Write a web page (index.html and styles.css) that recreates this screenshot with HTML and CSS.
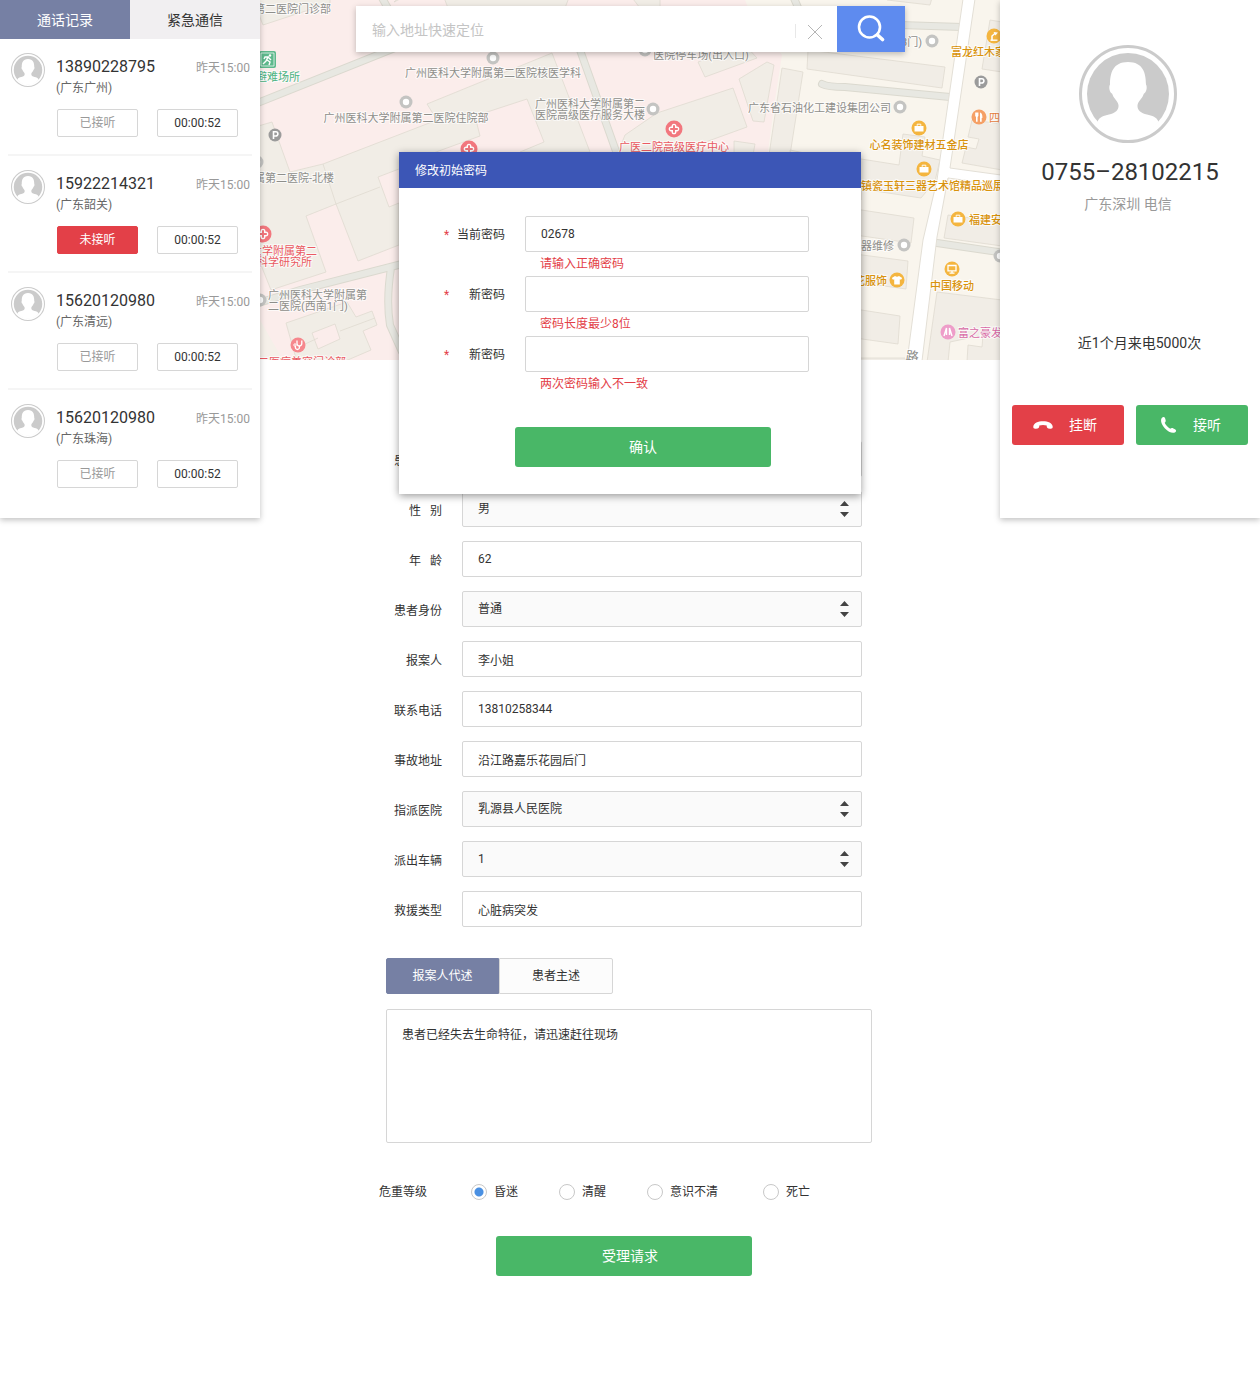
FILE: index.html
```html
<!DOCTYPE html>
<html lang="zh-CN">
<head>
<meta charset="utf-8">
<meta name="viewport" content="width=device-width, initial-scale=1">
<title>急救调度中心</title>
<link rel="stylesheet" href="styles.css">
</head>
<body>
<svg class="sprite" aria-hidden="true">
  <symbol id="avatar" viewBox="0 0 98 98">
    <circle cx="49" cy="49" r="47.5" fill="#fff" stroke="#cbcbcb" stroke-width="3"/>
    <circle cx="49" cy="49" r="41" fill="#cbcbcb"/>
    <path fill="#fff" d="M18.5 77C20 72 25 70.500 30 69.500C36 68 40 65.500 39.500 60C39 57 37 55.500 35 52.500C34 51 33.500 49.500 33 48.500C30.500 47.500 29.500 42 31 39.500C31 28 34 17 49 17C64 17 67 28 67 39.500C68.500 42 67.500 47.500 65 48.500C64.500 49.500 64 51 63 52.500C61 55.500 59 57 58.500 60C58 65.500 62 68 68 69.500C73 70.500 78 72 79.500 77C72 86 62 91.500 49 91.500C36 91.500 26 86 18.500 77Z"/>
  </symbol>
  <symbol id="pin" viewBox="-7 -7 14 14"><circle r="6.500" fill="#c4c4c2"/><circle r="3.200" fill="#fff"/></symbol>
  <symbol id="parking" viewBox="-7 -7 14 14"><circle r="6.500" fill="#9b9b9b"/><path d="M-1.500 4V-3.200H.8a2 2 0 0 1 0 4.200H-1.500" fill="none" stroke="#fff" stroke-width="1.600"/></symbol>
  <symbol id="hospital" viewBox="-9 -9 18 18"><circle r="8.500" fill="#f2777e"/><path d="M-2.400-2.400C-3-6.300 3-6.300 2.400-2.400C6.300-3 6.300 3 2.400 2.400C3 6.300-3 6.300-2.400 2.400C-6.300 3-6.300-3-2.400-2.400Z" fill="#fff"/><path d="M0-3.800V3.800M-3.800 0H3.800" stroke="#f2777e" stroke-width="2"/></symbol>
  <symbol id="clinic" viewBox="-8 -8 16 16"><circle r="7.500" fill="#f6878d"/><path d="M-1-4.500v3a2.400 2.400 0 0 0 4.800 0v-3M1.400 1v1.500a2 2 0 0 1-4 0V1" fill="none" stroke="#fff" stroke-width="1.300"/><circle cx="-3" cy="0" r="1.200" fill="none" stroke="#fff"/></symbol>
  <symbol id="shop" viewBox="-8 -8 16 16"><circle r="7.500" fill="#f4b53f"/><path d="M-4.500-2H4.500V3.500H-4.500Z" fill="#fff"/><path d="M-1.800-2.200V-3.800H1.800V-2.200" fill="none" stroke="#fff" stroke-width="1"/></symbol>
  <symbol id="telecom" viewBox="-8 -8 16 16"><circle r="7.500" fill="#f4b53f"/><path d="M-4-3.500H4V1.800H-4ZM0 2V4M-2.500 4.200H2.500" fill="none" stroke="#fff" stroke-width="1.300"/></symbol>
  <symbol id="clothes" viewBox="-8 -8 16 16"><circle r="7.500" fill="#f4b53f"/><path d="M-2-4Q0-2.500 2-4L5.200-2 4-.2 2.800-.8V4.500H-2.800V-.8L-4-.2-5.200-2Z" fill="#fff"/></symbol>
  <symbol id="furniture" viewBox="-8 -8 16 16"><circle r="7.500" fill="#f4b53f"/><path d="M-3.500 4.200H3.500" stroke="#fff" stroke-width="1.400"/><path d="M-.5-4L4-3.500 1.500-.5Z" fill="#fff"/><path d="M-2 4V0L1.500-3" fill="none" stroke="#fff" stroke-width="1.500"/></symbol>
  <symbol id="food" viewBox="-8 -8 16 16"><circle r="7.500" fill="#f5a066"/><path d="M-3.800-4.500H-.6V-1L-1.400 0V4.800H-3V0L-3.800-1ZM1-4.500Q3.600-4 3.400 1H2.700V4.800H1Z" fill="#fff"/></symbol>
  <symbol id="hair" viewBox="-8 -8 16 16"><circle r="7.500" fill="#ee9dc9"/><path d="M-4 4L-1.500-4V3M4 4L1.500-4V3" fill="none" stroke="#fff" stroke-width="1.400"/></symbol>
</svg>

<div class="page">
  <aside class="panel calls">
    <nav class="call-tabs">
      <button type="button" class="call-tab active">通话记录</button>
      <button type="button" class="call-tab">紧急通信</button>
    </nav>
    <ul class="call-list">
      <li class="call">
        <svg class="call-avatar"><use href="#avatar"/></svg>
        <div class="call-info">
          <div class="call-head"><span class="call-number">13890228795</span><time>昨天15:00</time></div>
          <p class="call-region">(广东广州)</p>
          <div class="call-actions"><button type="button" class="tag muted">已接听</button><button type="button" class="tag">00:00:52</button></div>
        </div>
      </li>
      <li class="call">
        <svg class="call-avatar"><use href="#avatar"/></svg>
        <div class="call-info">
          <div class="call-head"><span class="call-number">15922214321</span><time>昨天15:00</time></div>
          <p class="call-region">(广东韶关)</p>
          <div class="call-actions"><button type="button" class="tag missed">未接听</button><button type="button" class="tag">00:00:52</button></div>
        </div>
      </li>
      <li class="call">
        <svg class="call-avatar"><use href="#avatar"/></svg>
        <div class="call-info">
          <div class="call-head"><span class="call-number">15620120980</span><time>昨天15:00</time></div>
          <p class="call-region">(广东清远)</p>
          <div class="call-actions"><button type="button" class="tag muted">已接听</button><button type="button" class="tag">00:00:52</button></div>
        </div>
      </li>
      <li class="call">
        <svg class="call-avatar"><use href="#avatar"/></svg>
        <div class="call-info">
          <div class="call-head"><span class="call-number">15620120980</span><time>昨天15:00</time></div>
          <p class="call-region">(广东珠海)</p>
          <div class="call-actions"><button type="button" class="tag muted">已接听</button><button type="button" class="tag">00:00:52</button></div>
        </div>
      </li>
    </ul>
  </aside>

  <main class="center">
    <section class="map-area">
      <svg class="map" viewBox="260 0 740 360" preserveAspectRatio="xMidYMid slice" role="img" aria-label="地图">
        <rect x="260" width="740" height="360" fill="#fbedeb"/>
        <path d="M745 0L750 12 782 55 775 100 768 152V360H1000V0Z" fill="#f9f5ed"/>
        <path d="M260 320L283 360H260Z" fill="#f5f0e9"/>
        <g fill="#f1ede6" stroke="#dfdbd0" stroke-width=".8">
          <path d="M255-5H330V3L263 25 255 5ZM394 2L408-5H402ZM443-5H570L565 8H448ZM630-5H660V8H640Z"/>
          <path d="M427 104L552 53 567 92 590 152H520L544 142 527 99 475 116 480 136 436 152 399 169 378 177 389 207 399 203V245L358 261 336 204 306 216 326 272 271 290 255 250V127L272 122 290 172 323 164 437 120Z"/>
          <path d="M323 164L336 204 380 187" fill="none"/>
          <path d="M286 323L347 302 356 317 372 311 377 325 363 331 371 350 343 362H297Z"/>
          <path d="M312 333L335 324 340 339 318 349Z" fill="#fbedeb"/><path d="M340 331L375 318M318 338L303 345" fill="none"/>
          <path d="M698 62L705 77 757 58 745 45ZM739 79L767 62 774 65 764 122 753 121ZM657 113L733 88 747 127 700 144 690 155H617L625 135ZM734 141L755 144 753 155H734ZM782 68L803 72 790 155H769ZM790 150L861 165V200H790ZM808 50L945 67 942 88 807 69ZM887-2H932L930 5 887 0Z"/>
          <path d="M990 20L1002 22V72L982 69ZM972 120L1002 124V170L962 163 966 147 976 149 979 139 968 137ZM903 134L925 137 922 156 940 160 935 181 921 198 855 188V158L899 165ZM855 209L914 218 911 243 855 235ZM855 254L908 261 906 289 855 282ZM855 309L900 316 898 344 855 338ZM948 215L1002 222V246L944 238ZM937 292L1002 300V362H967L968 345 982 347 983 335 950 342 948 362H927ZM855 358H905V362H855Z"/>
        </g>
        <g fill="none" stroke="#dbd9cf" stroke-linecap="round">
          <g stroke-width="8"><path d="M255 104L420 38M572 25L580 50 617 154M381-4L390 12M793-4L800 12M255 304L300 290 402 264M391 268Q386 300 390 325L402 352M822 84Q828 87 845 87L950 97M900 25L962 27M937 243L1005 253"/></g>
          <g stroke="#e8e8e2" stroke-width="6"><path d="M255 104L420 38M572 25L580 50 617 154M381-4L390 12M793-4L800 12M255 304L300 290 402 264M391 268Q386 300 390 325L402 352M822 84Q828 87 845 87L950 97M900 25L962 27M937 243L1005 253"/></g>
        </g>
        <path d="M963-1L937 180 923 240 907 361H922L937 237 948 178 1001 185V175L950 168 975-1Z" fill="#fff" stroke="#e3dfd6"/>
        <rect x="259" y="51" width="17" height="17" rx="2" fill="#5eb98c"/>
        <path d="M261 53H274V66H261Z" fill="none" stroke="#fff" stroke-width=".7"/>
        <path d="M263 64L266 61 268 57 265 57 264 59M268 57L271 60M267 60L270 62 269 65" fill="none" stroke="#fff" stroke-width="1.400"/><circle cx="270" cy="55.500" r="1.200" fill="#fff"/>
        <g>
          <use href="#pin" x="486" y="51" width="14" height="14"/><use href="#pin" x="399" y="95" width="14" height="14"/>
          <use href="#pin" x="646" y="102" width="14" height="14"/><use href="#pin" x="638" y="43" width="14" height="14"/>
          <use href="#pin" x="925" y="34" width="14" height="14"/><use href="#pin" x="893" y="100" width="14" height="14"/>
          <use href="#pin" x="897" y="238" width="14" height="14"/><use href="#pin" x="993" y="249" width="14" height="14"/>
          <use href="#pin" x="250" y="155" width="14" height="14"/><use href="#pin" x="253" y="293" width="14" height="14"/>
          <use href="#parking" x="268" y="128" width="14" height="14"/><use href="#parking" x="974" y="75" width="14" height="14"/>
          <use href="#hospital" x="460" y="140" width="18" height="18"/><use href="#hospital" x="665" y="120" width="18" height="18"/><use href="#hospital" x="254" y="225" width="18" height="18"/>
          <use href="#clinic" x="290" y="337" width="16" height="16"/>
          <use href="#shop" x="911" y="120" width="16" height="16"/><use href="#shop" x="916" y="161" width="16" height="16"/><use href="#shop" x="950" y="211" width="16" height="16"/>
          <use href="#telecom" x="944" y="261" width="16" height="16"/><use href="#clothes" x="889" y="272" width="16" height="16"/>
          <use href="#furniture" x="986" y="28" width="16" height="16"/><use href="#food" x="971" y="109" width="16" height="16"/><use href="#hair" x="940" y="324" width="16" height="16"/>
        </g>
        <g class="place">
          <text class="end" x="331" y="13">第二医院门诊部</text>
          <text class="mid" x="493" y="77">广州医科大学附属第二医院核医学科</text>
          <text class="mid" x="406" y="122">广州医科大学附属第二医院住院部</text>
          <text class="mid"><tspan x="590" y="108">广州医科大学附属第二</tspan><tspan x="590" y="119">医院高级医疗服务大楼</tspan></text>
          <text class="end" x="334" y="182">属第二医院-北楼</text>
          <text class="mid" x="701" y="59">医院停车场(出入口)</text>
          <text class="end" x="922" y="46">(3门)</text>
          <text class="end" x="891" y="112">广东省石油化工建设集团公司</text>
          <text class="end" x="894" y="250">电器维修</text>
          <text><tspan x="268" y="299">广州医科大学附属第</tspan><tspan x="268" y="310">二医院(西南1门)</tspan></text>
          <text class="street" x="906" y="361" transform="rotate(8 912 355)">路</text>
        </g>
        <g class="place safe"><text class="end" x="300" y="81">避难场所</text></g>
        <g class="place medical">
          <text class="mid" x="674" y="151">广医二院高级医疗中心</text>
          <text class="end"><tspan x="317" y="255">大学附属第二</tspan><tspan x="312" y="266">科学研究所</tspan></text>
          <text class="end" x="346" y="366">二医病美容门诊部</text>
        </g>
        <g class="place business">
          <text x="951" y="56">富龙红木家</text>
          <text class="mid" x="919" y="149">心名装饰建材五金店</text>
          <text class="end" x="1004" y="190">德镇瓷玉轩三器艺术馆精品巡展</text>
          <text x="969" y="224">福建安</text>
          <text class="end" x="887" y="285">花服饰</text>
          <text class="mid" x="952" y="290">中国移动</text>
        </g>
        <g class="place dining"><text x="989" y="122">四</text></g>
        <g class="place beauty"><text x="958" y="337">富之豪发</text></g>
      </svg>
      <form class="search">
        <input class="search-input" type="text" placeholder="输入地址快速定位" aria-label="输入地址快速定位">
        <button type="button" class="search-clear" aria-label="清除"><svg width="16" height="16" viewBox="0 0 16 16"><path d="M1 1L15 15M15 1L1 15" stroke="#b5b5b5"/></svg></button>
        <button type="button" class="search-go" aria-label="搜索"><svg width="28" height="28" viewBox="0 0 28 28" fill="none" stroke="#fff" stroke-linecap="round"><circle cx="12.500" cy="12" r="10.500" stroke-width="2.600"/><path d="M20.500 20L25.500 24.500" stroke-width="3.600"/></svg></button>
      </form>
    </section>

    <form class="case">
      <div class="row"><label for="name">患者姓名</label><input class="box" id="name" type="text"></div>
      <div class="row"><label for="sex">性&nbsp;&nbsp;&nbsp;别</label><span class="pick"><select class="box" id="sex"><option>男</option><option>女</option></select><svg viewBox="0 0 9 16"><path d="M0 5L4.500 0 9 5ZM0 11H9L4.500 16Z"/></svg></span></div>
      <div class="row"><label for="age">年&nbsp;&nbsp;&nbsp;龄</label><input class="box" id="age" type="text" value="62"></div>
      <div class="row"><label for="identity">患者身份</label><span class="pick"><select class="box" id="identity"><option>普通</option></select><svg viewBox="0 0 9 16"><path d="M0 5L4.500 0 9 5ZM0 11H9L4.500 16Z"/></svg></span></div>
      <div class="row"><label for="reporter">报案人</label><input class="box" id="reporter" type="text" value="李小姐"></div>
      <div class="row"><label for="phone">联系电话</label><input class="box" id="phone" type="text" value="13810258344"></div>
      <div class="row"><label for="address">事故地址</label><input class="box" id="address" type="text" value="沿江路嘉乐花园后门"></div>
      <div class="row"><label for="hospital-name">指派医院</label><span class="pick"><select class="box" id="hospital-name"><option>乳源县人民医院</option></select><svg viewBox="0 0 9 16"><path d="M0 5L4.500 0 9 5ZM0 11H9L4.500 16Z"/></svg></span></div>
      <div class="row"><label for="vehicles">派出车辆</label><span class="pick"><select class="box" id="vehicles"><option>1</option></select><svg viewBox="0 0 9 16"><path d="M0 5L4.500 0 9 5ZM0 11H9L4.500 16Z"/></svg></span></div>
      <div class="row"><label for="rescue">救援类型</label><input class="box" id="rescue" type="text" value="心脏病突发"></div>

      <div class="statement">
        <div class="statement-tabs">
          <button type="button" class="statement-tab active">报案人代述</button>
          <button type="button" class="statement-tab">患者主述</button>
        </div>
        <textarea class="statement-text" aria-label="报案人代述">患者已经失去生命特征，请迅速赶往现场</textarea>
      </div>

      <fieldset class="severity">
        <legend>危重等级</legend>
        <label><input type="radio" name="severity" checked>昏迷</label>
        <label><input type="radio" name="severity">清醒</label>
        <label><input type="radio" name="severity">意识不清</label>
        <label><input type="radio" name="severity">死亡</label>
      </fieldset>
      <button type="button" class="primary accept">受理请求</button>
    </form>
  </main>

  <aside class="panel caller">
    <svg class="caller-avatar"><use href="#avatar"/></svg>
    <h1>0755–28102215</h1>
    <p class="caller-region">广东深圳 电信</p>
    <p class="caller-count">近1个月来电5000次</p>
    <div class="caller-actions">
      <button type="button" class="hang-up"><svg width="20" height="20" viewBox="0 0 20 20"><path fill="#fff" d="M.3 11.500C.8 8 5 6.200 10 6.200S19.200 8 19.700 11.500C19.900 13.200 18.800 14 17 13.700L15.400 13.400C13.800 13 13.700 12.200 13.700 10.600C11.500 9.800 8.500 9.800 6.300 10.600C6.300 12.200 6.200 13 4.600 13.400L3 13.700C1.200 14 .1 13.200.3 11.500Z"/></svg>挂断</button>
      <button type="button" class="answer"><svg width="20" height="20" viewBox="0 0 20 20"><path fill="#fff" d="M5.200 2.600C6.400 1.500 7.500 2 8.100 3.300L8.600 4.900C9 6.200 8.500 6.900 7.700 7.700C8.700 10 10.800 12.300 13.200 13.700C14.300 12.800 15.200 12.700 16.400 13.400L18 14.300C19.400 15.200 19.500 16.500 18.200 17.300C15.500 18.800 11.400 17 8 13.500C4.600 10 2.700 4.900 5.200 2.600Z"/></svg>接听</button>
    </div>
  </aside>

  <dialog class="modal" open aria-labelledby="modal-title">
    <h2 id="modal-title">修改初始密码</h2>
    <form class="modal-form">
      <label for="old-password"><span class="star">*</span>当前密码</label>
      <input class="box" id="old-password" type="text" value="02678">
      <p class="error">请输入正确密码</p>
      <label for="new-password"><span class="star">*</span>新密码</label>
      <input class="box" id="new-password" type="password">
      <p class="error">密码长度最少8位</p>
      <label for="repeat-password"><span class="star">*</span>新密码</label>
      <input class="box" id="repeat-password" type="password">
      <p class="error">两次密码输入不一致</p>
      <button type="button" class="primary confirm">确认</button>
    </form>
  </dialog>
</div>
</body>
</html>
```
FILE: styles.css
```css
* { box-sizing: border-box; }

body {
  margin: 0;
  background: #fff;
  color: #333;
  font: 12px/20px Roboto, "Noto Sans CJK SC", sans-serif;
}

h1, h2, p, ul { margin: 0; padding: 0; font-weight: 400; }
ul { list-style: none; }
button, input, select, textarea { font: inherit; color: inherit; margin: 0; }
button { padding: 0; border: 0; cursor: pointer; }

.sprite { position: absolute; width: 0; height: 0; }

.page {
  position: relative;
  display: grid;
  grid-template-columns: 260px minmax(0, 1fr) 260px;
  align-items: start;
  min-height: 100vh;
}

.panel {
  position: relative;
  z-index: 1;
  background: #fff;
  box-shadow: 0 2px 6px rgba(0, 0, 0, .25);
}

/* call history */
.calls { padding-bottom: 11px; }
.call-tabs { display: grid; grid-template-columns: 1fr 1fr; }
.call-tab { height: 39px; background: #f1eff1; font-size: 14px; }
.call-tab.active { background: #7680a4; color: #fff; }

.call {
  display: grid;
  grid-template-columns: 34px 1fr;
  gap: 11px;
  margin: 0 8px;
  padding: 14px 2px 17px 3px;
  border-bottom: 2px solid #f5f5f5;
}
.call:last-child { border-color: transparent; }
.call-avatar { width: 34px; height: 34px; }
.call-head { display: flex; justify-content: space-between; height: 28px; line-height: 28px; }
.call-number { font-size: 16px; }
.call-head time { padding-top: 1px; color: #999; }
.call-region { line-height: 14px; color: #666; }
.call-actions { display: flex; gap: 19px; margin: 14px 0 0 1px; }
.tag {
  width: 81px;
  height: 28px;
  border: 1px solid #d6d6d6;
  border-radius: 2px;
  background: #fff;
}
.tag.muted { color: #999; }
.tag.missed { background: #e34048; border-color: #e34048; color: #fff; }

/* map and address search */
.map-area { display: grid; grid-template-rows: 360px; }
.map { grid-area: 1 / 1; width: 100%; height: 360px; }
.place { font-size: 11px; fill: #8e8e8a; stroke: #fff; stroke-width: 2px; stroke-opacity: .7; paint-order: stroke; }
.place .mid { text-anchor: middle; }
.place .end { text-anchor: end; }
.place .street { font-size: 13px; }
.safe { fill: #4bb382; }
.medical { fill: #ea5a62; }
.business { fill: #d9930d; font-weight: 500; }
.dining { fill: #e5803f; }
.beauty { fill: #d86aa6; }

.search {
  grid-area: 1 / 1;
  align-self: start;
  display: flex;
  height: 46px;
  margin: 6px 95px 0 96px;
  background: #fff;
  box-shadow: 0 2px 6px rgba(0, 0, 0, .25);
  z-index: 0;
}
.search-input {
  flex: 1;
  min-width: 0;
  padding: 2px 16px 0;
  border: 0;
  background: none;
  font-size: 14px;
}
.search-input::placeholder { color: #c4c4c4; }
.search-clear {
  align-self: center;
  display: grid;
  place-items: center;
  width: 42px;
  height: 14px;
  margin-top: 4px;
  padding-right: 4px;
  border-left: 1px solid #e8e8e8;
  background: none;
}
.search-go { display: grid; place-items: center; width: 68px; background: #5e8bef; }

/* case form */
.case { width: 502px; margin: 0 auto; padding: 81px 0 104px; }
.row {
  display: grid;
  grid-template-columns: 63px 400px;
  gap: 20px;
  align-items: center;
  margin-bottom: 14px;
}
.row label { padding-top: 4px; text-align: right; }
.box {
  width: 100%;
  height: 36px;
  padding: 0 15px;
  border: 1px solid #d6d6d6;
  border-radius: 2px;
  background: #fff;
}
.pick { display: grid; align-items: center; }
.pick select { grid-area: 1 / 1; appearance: none; background: #fafafa; }
.pick svg {
  grid-area: 1 / 1;
  justify-self: end;
  width: 9px;
  height: 16px;
  margin-right: 13px;
  fill: #444;
  pointer-events: none;
}

.statement { margin: 31px 9px 0 7px; }
.statement-tabs { display: grid; grid-template-columns: 113px 114px; }
.statement-tab {
  height: 36px;
  border: 1px solid #d6d6d6;
  border-radius: 0 2px 2px 0;
  background: #fcfcfc;
}
.statement-tab.active {
  border-color: #7680a4;
  border-radius: 2px 0 0 2px;
  background: #7680a4;
  color: #fff;
}
.statement-text {
  display: block;
  width: 100%;
  height: 134px;
  margin-top: 15px;
  padding: 15px;
  border: 1px solid #d6d6d6;
  border-radius: 2px;
  resize: none;
}

.severity {
  display: flex;
  gap: 41px;
  margin: 39px 0 0;
  padding: 0;
  border: 0;
}
.severity legend { float: left; padding: 0; margin-right: 3px; }
.severity label { display: flex; align-items: center; gap: 7px; }
.severity label:last-child { margin-left: 4px; }
.severity input {
  appearance: none;
  width: 16px;
  height: 16px;
  border: 1px solid #c8c8c8;
  border-radius: 50%;
  background: #fff;
}
.severity input:checked { background: radial-gradient(circle, #4a90e2 4px, #fff 5px); }

.primary {
  display: block;
  width: 256px;
  height: 40px;
  border-radius: 3px;
  background: #49b767;
  color: #fff;
  font-size: 14px;
}
.accept { margin: 34px 0 0 117px; padding-left: 12px; }

/* incoming caller */
.caller { padding: 45px 12px 73px; text-align: center; }
.caller-avatar { display: block; width: 98px; height: 98px; margin: 0 0 12px 67px; }
.caller h1 { font-size: 24px; line-height: 34px; }
.caller-region { margin-top: 5px; padding-right: 4px; font-size: 14px; color: #999; }
.caller-count { margin-top: 119px; padding-left: 19px; font-size: 14px; }
.caller-actions { display: grid; grid-template-columns: 1fr 1fr; gap: 12px; margin-top: 52px; }
.caller-actions button {
  display: flex;
  align-items: center;
  justify-content: center;
  gap: 16px;
  height: 40px;
  padding-right: 6px;
  border-radius: 3px;
  color: #fff;
  font-size: 14px;
}
.hang-up { background: #e34048; }
.answer { background: #49b767; }

/* password dialog */
.modal {
  position: absolute;
  z-index: 2;
  top: 152px;
  left: 0;
  right: 0;
  width: 462px;
  margin: 0 auto;
  padding: 0;
  border: 0;
  background: #fff;
  color: #333;
  box-shadow: 0 2px 8px rgba(0, 0, 0, .4);
}
.modal h2 { padding: 2px 16px 0; background: #3c56b6; color: #fff; font-size: 12px; line-height: 34px; }
.modal-form {
  display: grid;
  grid-template-columns: 61px 284px;
  column-gap: 20px;
  align-items: center;
  padding: 28px 0 27px 45px;
}
.modal-form label { display: flex; justify-content: space-between; padding-top: 2px; }
.star, .error { color: #e34048; }
.error { grid-column: 2; padding-left: 15px; line-height: 24px; }
.confirm { grid-column: 1 / -1; margin: 31px 0 0 71px; }
```
